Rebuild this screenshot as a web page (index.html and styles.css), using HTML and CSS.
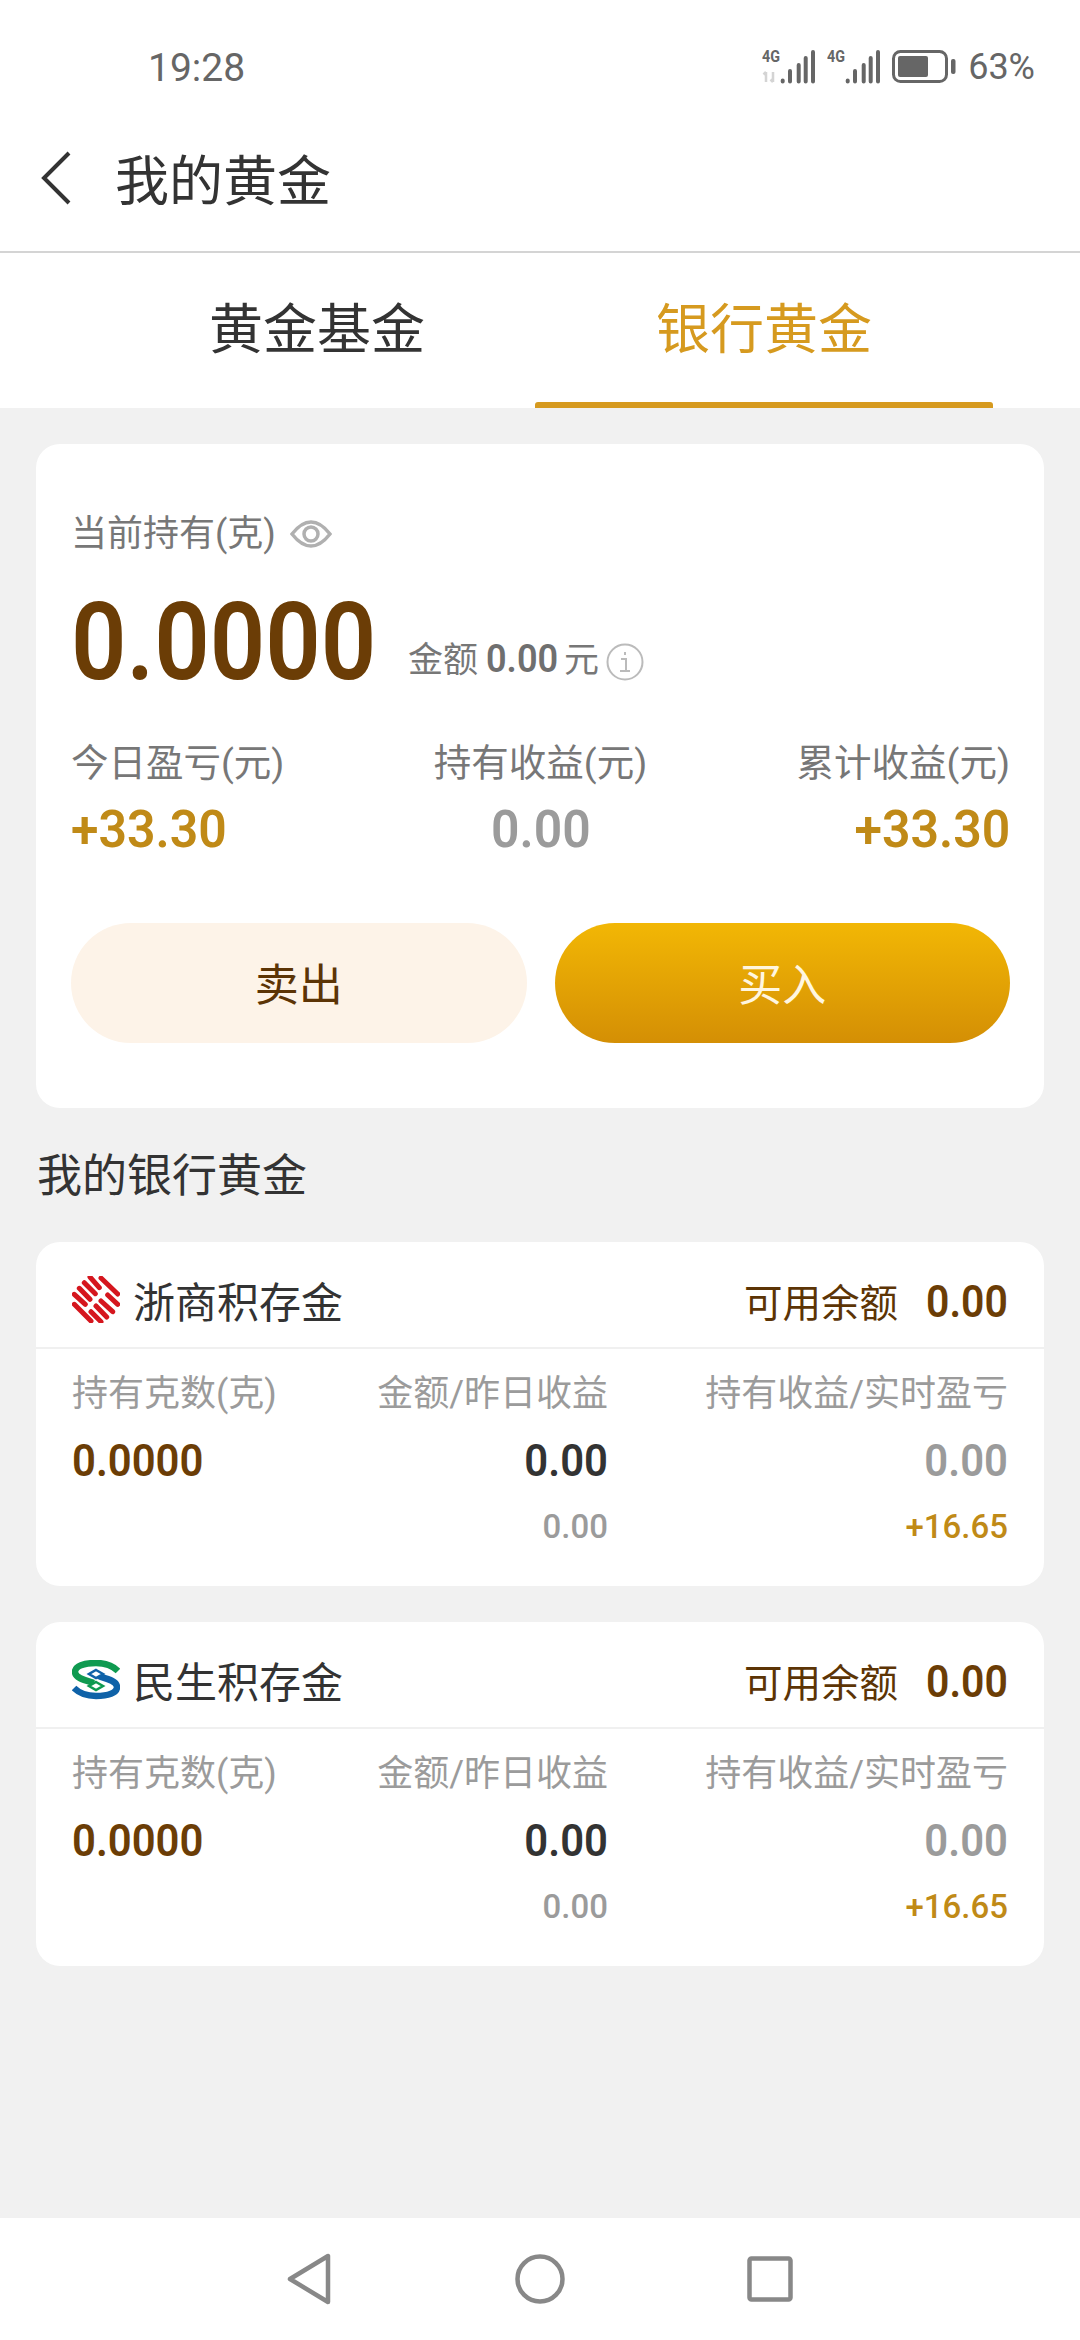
FILE: index.html
```html
<!DOCTYPE html>
<html lang="zh-CN">
<head>
  <meta charset="UTF-8">
  <title>我的黄金</title>
  <link rel="stylesheet" href="styles.css">
</head>
<body>
  <div class="status-bar">
    <span class="time">19:28</span>
    <div class="status-icons">
      <svg width="53" height="42" viewBox="0 -4 53 42">
        <text x="0" y="12" class="net-label" textLength="18" lengthAdjust="spacingAndGlyphs">4G</text>
        <path d="M4 32V22M1.500 24.500L4 22M11 22v10M8.500 29.500L11 32" stroke="#d4d4d4" stroke-width="2.500" fill="none"/>
        <path d="M20.700 30.500v1M28 21v10.500M36.700 15v16.500M43.700 8v23.500M51 2v29.500" stroke="#666" stroke-width="4" stroke-linecap="round" fill="none"/>
      </svg>
      <svg width="53" height="42" viewBox="0 -4 53 42">
        <text x="0" y="12" class="net-label" textLength="18" lengthAdjust="spacingAndGlyphs">4G</text>
        <path d="M20.700 30.500v1M28 21v10.500M36.700 15v16.500M43.700 8v23.500M51 2v29.500" stroke="#666" stroke-width="4" stroke-linecap="round" fill="none"/>
      </svg>
      <svg width="64" height="34" viewBox="0 0 64 34">
        <rect x="1.500" y="1.500" width="53" height="30" rx="7" fill="none" stroke="#666" stroke-width="3"/>
        <rect x="6" y="6" width="30" height="21" rx="2" fill="#666"/>
        <rect x="59" y="9" width="4.500" height="15" rx="2" fill="#666"/>
      </svg>
      <span class="battery">63%</span>
    </div>
  </div>

  <header class="title-bar">
    <svg class="back" width="34" height="54" viewBox="0 0 34 54">
      <path d="M30 2L5 27l25 25" fill="none" stroke="#333" stroke-width="4"/>
    </svg>
    <h1>我的黄金</h1>
  </header>

  <nav class="tabs">
    <div class="tab">黄金基金</div>
    <div class="tab active">银行黄金</div>
  </nav>

  <main class="content">
    <section class="card summary">
      <div class="holding-label">
        <span>当前持有(克)</span>
        <svg width="42" height="28" viewBox="0 0 42 28">
          <path d="M2 14C9 5 15 2 21 2s12 3 19 12c-7 9-13 12-19 12S9 23 2 14z" fill="none" stroke="#b0b0b0" stroke-width="3.500"/>
          <circle cx="21" cy="14" r="7" fill="none" stroke="#b0b0b0" stroke-width="3.500"/>
        </svg>
      </div>
      <div class="holding-row">
        <span class="holding-value">0.0000</span>
        <div class="amount">
          <span>金额</span>
          <b>0.00</b>
          <span>元</span>
        </div>
        <svg class="info" width="38" height="38" viewBox="0 0 38 38">
          <circle cx="19" cy="19" r="17.500" fill="none" stroke="#bbb" stroke-width="2"/>
          <path d="M19 9v3M15 16h5v12M14 28h10" fill="none" stroke="#bbb" stroke-width="2"/>
        </svg>
      </div>
      <div class="stats">
        <div class="stat">
          <span class="stat-label">今日盈亏(元)</span>
          <span class="stat-value gold">+33.30</span>
        </div>
        <div class="stat center">
          <span class="stat-label">持有收益(元)</span>
          <span class="stat-value grey">0.00</span>
        </div>
        <div class="stat right">
          <span class="stat-label">累计收益(元)</span>
          <span class="stat-value gold">+33.30</span>
        </div>
      </div>
      <div class="actions">
        <button class="btn sell">卖出</button>
        <button class="btn buy">买入</button>
      </div>
    </section>

    <h2>我的银行黄金</h2>

    <section class="card bank">
      <div class="bank-head">
        <svg width="48" height="47" viewBox="0 0 48 47">
          <path d="M29 2l16.700 16M18 1l9.300 10.700M12.300 6.700l11 11M7.300 12.300L18 23.300M2.300 18.300l11 10M2.300 28.300L19 45M35.700 19l10 9.300M29 25l11.700 10.700M24 30l10.700 11M19 35.700L29 45.700" stroke="#d5161e" stroke-width="5" stroke-linecap="round" fill="none"/>
        </svg>
        <span class="bank-name">浙商积存金</span>
        <div class="balance">
          <span>可用余额</span>
          <b>0.00</b>
        </div>
      </div>
      <div class="bank-grid">
        <span class="col-label">持有克数(克)</span>
        <span class="col-label right">金额/昨日收益</span>
        <span class="col-label right">持有收益/实时盈亏</span>
        <span class="num brown">0.0000</span>
        <span class="num dark right">0.00</span>
        <span class="num grey right">0.00</span>
        <span></span>
        <span class="sub grey right">0.00</span>
        <span class="sub gold right">+16.65</span>
      </div>
    </section>

    <section class="card bank">
      <div class="bank-head">
        <svg width="48" height="40" viewBox="0 0 48 40">
          <path d="M46 11C40 5 33 3 24 3 12 3 3 6 3 12c0 6 9 8 19 11" fill="none" stroke="#0f9a50" stroke-width="6.500"/>
          <path d="M2 28c6 6 13 8 22 8 12 0 21-3 21-9 0-6-9-8-19-11" fill="none" stroke="#0f62a8" stroke-width="6.500"/>
          <path d="M24 10l7 4-7 4-7-4z" fill="#fff" stroke="#0f62a8" stroke-width="2.500"/>
          <path d="M24 22l7 4-7 4-7-4z" fill="#fff" stroke="#0f9a50" stroke-width="2.500"/>
        </svg>
        <span class="bank-name">民生积存金</span>
        <div class="balance">
          <span>可用余额</span>
          <b>0.00</b>
        </div>
      </div>
      <div class="bank-grid">
        <span class="col-label">持有克数(克)</span>
        <span class="col-label right">金额/昨日收益</span>
        <span class="col-label right">持有收益/实时盈亏</span>
        <span class="num brown">0.0000</span>
        <span class="num dark right">0.00</span>
        <span class="num grey right">0.00</span>
        <span></span>
        <span class="sub grey right">0.00</span>
        <span class="sub gold right">+16.65</span>
      </div>
    </section>
  </main>

  <footer class="nav-bar">
    <svg width="46" height="52" viewBox="0 0 46 52">
      <path d="M41 3v46L3 26z" fill="none" stroke="#888" stroke-width="4.500" stroke-linejoin="round"/>
    </svg>
    <svg width="50" height="52" viewBox="0 0 50 52">
      <circle cx="25" cy="26" r="22.500" fill="none" stroke="#888" stroke-width="4.500"/>
    </svg>
    <svg width="46" height="52" viewBox="0 0 46 52">
      <rect x="2.500" y="5.500" width="41" height="41" rx="2" fill="none" stroke="#888" stroke-width="4.500"/>
    </svg>
  </footer>
</body>
</html>
```

FILE: styles.css
```css
* {
  box-sizing: border-box;
}

body {
  margin: 0;
  width: 1080px;
  height: 2340px;
  display: flex;
  flex-direction: column;
  background-color: #f1f1f1;
  font-family: "Roboto", "Noto Sans CJK SC", sans-serif;
  color: #333;
}

.status-bar {
  height: 118px;
  padding: 28px 45px 0 148px;
  display: flex;
  justify-content: space-between;
  align-items: flex-start;
  background-color: #fff;
}

.time {
  font-size: 39px;
  line-height: 80px;
  color: #666;
}

.status-icons {
  display: flex;
  align-items: center;
  gap: 12px;
  height: 78px;
}

.net-label {
  font: bold 16px "Roboto", sans-serif;
  fill: #666;
}

.battery {
  font-size: 36px;
  color: #666;
}

.title-bar {
  height: 135px;
  padding: 0 0 14px 39px;
  display: flex;
  align-items: center;
  gap: 42px;
  background-color: #fff;
  border-bottom: 2px solid #d4d4d4;
}

h1 {
  margin: 0;
  font-size: 54px;
  font-weight: 400;
}

.tabs {
  height: 155px;
  padding-left: 88px;
  display: flex;
  background-color: #fff;
}

.tab {
  position: relative;
  width: 458px;
  display: flex;
  justify-content: center;
  align-items: center;
  padding-bottom: 11px;
  font-size: 54px;
}

.tab.active {
  margin-left: -11px;
  color: #d69a1f;
}

.tab.active::after {
  content: "";
  position: absolute;
  left: 0;
  right: 0;
  bottom: 0;
  height: 6px;
  border-radius: 3px 3px 0 0;
  background-color: #d69a1f;
}

.content {
  flex: 1;
  padding: 36px 36px 0;
}

.card {
  background-color: #fff;
  border-radius: 24px;
}

.summary {
  height: 664px;
  padding: 66px 34px 0 35px;
}

.holding-label {
  display: flex;
  align-items: center;
  gap: 14px;
  font-size: 36px;
  line-height: 48px;
  color: #777;
}

.holding-row {
  margin-top: 34px;
  height: 100px;
  display: flex;
  align-items: flex-end;
}

.holding-value {
  width: 337px;
  font-size: 108px;
  font-weight: 600;
  line-height: 100px;
  color: #6b3d06;
  transform: scaleX(0.9);
  transform-origin: left;
}

.amount {
  margin-bottom: 6px;
  display: flex;
  align-items: baseline;
  gap: 8px;
  font-size: 35px;
  line-height: 50px;
  color: #777;
}

.amount b {
  width: 70px;
  font-size: 38px;
  font-weight: 600;
  color: #6f6f6f;
  transform: scaleX(0.95);
  transform-origin: left;
}

.info {
  margin: 0 0 11px 7px;
}

.stats {
  margin-top: 47px;
  display: grid;
  grid-template-columns: 1fr 1fr 1fr;
}

.stat {
  display: flex;
  flex-direction: column;
  gap: 13px;
}

.stat.center {
  align-items: center;
}

.stat.right {
  align-items: flex-end;
}

.stat-label {
  font-size: 37.500px;
  line-height: 48px;
  color: #777;
}

.stat-value {
  font-size: 52px;
  font-weight: 600;
  line-height: 60px;
  transform: scaleX(0.96);
  transform-origin: left;
}

.center .stat-value {
  transform-origin: center;
}

.right .stat-value {
  transform-origin: right;
}

.gold {
  color: #c08a17;
}

.grey {
  color: #9b9b9b;
}

.actions {
  margin-top: 63px;
  display: grid;
  grid-template-columns: 1fr 1fr;
  gap: 28px;
}

.btn {
  height: 120px;
  padding: 0 0 3px;
  border: none;
  border-radius: 60px;
  font-family: inherit;
  font-size: 44px;
}

.sell {
  background-color: #fdf3e8;
  color: #5c3405;
}

.buy {
  background: linear-gradient(#f2b705, #d48f05);
  color: #fff6e0;
}

h2 {
  margin: 39px 0 35px 1px;
  font-size: 45px;
  font-weight: 400;
  line-height: 60px;
  color: #333;
}

.bank {
  height: 344px;
  margin-bottom: 36px;
}

.bank-head {
  height: 107px;
  padding: 10px 36px 0 36px;
  display: flex;
  align-items: center;
  gap: 13px;
  border-bottom: 2px solid #f0f0f0;
}

.bank-name {
  flex: 1;
  font-size: 42px;
}

.balance {
  display: flex;
  align-items: baseline;
  gap: 20px;
  font-size: 38.500px;
  color: #5c3405;
}

.balance b {
  font-size: 45px;
  font-weight: 600;
  color: #6b3d06;
  transform: scaleX(0.91);
  transform-origin: right;
}

.bank-grid {
  padding: 20px 36px 0;
  display: grid;
  grid-template-columns: 1fr 1fr 400px;
  row-gap: 12px;
}

.col-label {
  font-size: 36px;
  line-height: 50px;
  color: #9b9b9b;
}

.num {
  font-size: 45px;
  font-weight: 600;
  line-height: 60px;
  transform: scaleX(0.93);
  transform-origin: left;
}

.sub {
  font-size: 34px;
  font-weight: 500;
  line-height: 46px;
  transform: scaleX(0.97);
  transform-origin: right;
}

.brown {
  color: #6b3d06;
}

.dark {
  color: #333;
}

.right {
  text-align: right;
}

.num.right {
  transform-origin: right;
}

.nav-bar {
  height: 122px;
  display: flex;
  justify-content: center;
  align-items: center;
  gap: 182px;
  background-color: #fff;
}
```
